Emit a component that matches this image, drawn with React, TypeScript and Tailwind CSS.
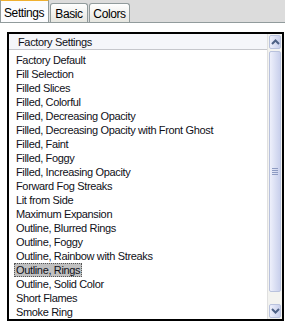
import React from "react"

const ITEMS = [
  "Factory Default",
  "Fill Selection",
  "Filled Slices",
  "Filled, Colorful",
  "Filled, Decreasing Opacity",
  "Filled, Decreasing Opacity with Front Ghost",
  "Filled, Faint",
  "Filled, Foggy",
  "Filled, Increasing Opacity",
  "Forward Fog Streaks",
  "Lit from Side",
  "Maximum Expansion",
  "Outline, Blurred Rings",
  "Outline, Foggy",
  "Outline, Rainbow with Streaks",
  "Outline, Rings",
  "Outline, Solid Color",
  "Short Flames",
  "Smoke Ring",
]

const SELECTED = "Outline, Rings"

function Tab({ label, active, w }: { label: string; active?: boolean; w: string }) {
  if (active) {
    return (
      <div className={`${w} relative z-10 h-[23px] pl-[3px] pt-[3px] bg-[#fcfcfe] border-t-2 border-t-[#f0b030] border-x border-x-[#919b9c] text-[12px] tracking-[-0.4px] text-black`}>
        {label}
      </div>
    )
  }
  return (
    <div className={`${w} mt-[3px] h-[19px] text-center pt-[1px] bg-gradient-to-b from-white to-[#e6e6e0] border border-b-0 border-[#919b9c] rounded-t-[3px] text-[12px] tracking-[-0.4px] text-black`}>
      {label}
    </div>
  )
}

function ArrowUp() {
  return (
    <svg width="9" height="6" viewBox="0 0 9 6">
      <path d="M1 5 L4.5 1.5 L8 5" fill="none" stroke="#4d6185" strokeWidth="2" />
    </svg>
  )
}

function ArrowDown() {
  return (
    <svg width="9" height="6" viewBox="0 0 9 6">
      <path d="M1 1 L4.5 4.5 L8 1" fill="none" stroke="#4d6185" strokeWidth="2" />
    </svg>
  )
}

export default function App() {
  return (
    <div
      className="w-[285px] h-[322px] bg-white overflow-hidden flex flex-col"
      style={{ fontFamily: '"Liberation Sans", Arial, sans-serif' }}
    >
      {/* tab strip */}
      <div className="h-[23px] bg-[#dcdcdc] flex items-end border-b border-[#919b9c] shrink-0">
        <Tab label="Settings" active w="w-[49px]" />
        <div className="ml-px"><Tab label="Basic" w="w-[38px]" /></div>
        <div className="ml-px"><Tab label="Colors" w="w-[41px]" /></div>
      </div>

      {/* panel */}
      <div className="flex-1 pl-[7px] pt-[9px] pb-[2px] pr-px">
        <div className="h-full border-2 border-black flex">
          <div className="flex-1 flex flex-col min-w-0">
            <div className="h-[16px] bg-[#f5f6fa] border-b border-[#c6c7cc] pl-[9px] text-[11px] tracking-[-0.35px] leading-[16px] text-[#101018]">
              Factory Settings
            </div>
            <div className="pt-[3px] pl-[5px] overflow-hidden">
              {ITEMS.map((item) => (
                <div key={item} className="h-[14px] leading-[14px] text-[11px] tracking-[-0.35px] text-[#101018] whitespace-nowrap">
                  <span
                    className={
                      item === SELECTED
                        ? "inline-block px-[2px] bg-[#c0c0c0] outline outline-1 outline-dotted outline-[#555] -outline-offset-1"
                        : "inline-block px-[2px]"
                    }
                  >
                    {item}
                  </span>
                </div>
              ))}
            </div>
          </div>

          {/* scrollbar */}
          <div className="w-[15px] bg-[#f3f3f0] flex flex-col border-l border-[#e0e0e0]">
            <div className="h-[14px] m-px mb-0 bg-gradient-to-r from-[#eef0fb] to-[#c9d0ec] border border-[#b9c2dd] rounded-[2px] flex items-center justify-center">
              <ArrowUp />
            </div>
            <div className="flex-1 mx-px mt-[2px] mb-[12px] bg-gradient-to-r from-[#eef0fb] to-[#c9d0ec] border border-[#b9c2dd] rounded-[2px] flex items-center justify-center">
              <div className="flex flex-col gap-px">
                <div className="w-[6px] h-px bg-[#8e9bc2]" />
                <div className="w-[6px] h-px bg-[#8e9bc2]" />
                <div className="w-[6px] h-px bg-[#8e9bc2]" />
                <div className="w-[6px] h-px bg-[#8e9bc2]" />
              </div>
            </div>
            <div className="h-[14px] m-px mt-0 bg-gradient-to-r from-[#eef0fb] to-[#c9d0ec] border border-[#b9c2dd] rounded-[2px] flex items-center justify-center">
              <ArrowDown />
            </div>
          </div>
        </div>
      </div>
    </div>
  )
}
